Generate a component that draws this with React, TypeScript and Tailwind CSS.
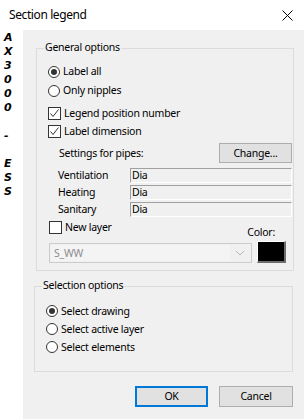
const strip = ['A', 'X', '3', '0', '0', '0', '', '-', '', 'E', 'S', 'S']

function Radio({checked, label}: {checked?: boolean; label: string}) {
  return (
    <div className="flex items-center h-full gap-[3px]">
      <div className="w-[12px] h-[12px] rounded-full border border-[#333333] bg-white flex items-center justify-center">
        {checked && <div className="w-[6px] h-[6px] rounded-full bg-[#333333]" />}
      </div>
      <span>{label}</span>
    </div>
  )
}

function Check({checked, label}: {checked?: boolean; label: string}) {
  return (
    <div className="flex items-center h-full gap-[3px]">
      <div className="w-[13px] h-[13px] border border-[#333333] bg-white flex items-center justify-center">
        {checked && (
          <svg width="11" height="11" viewBox="0 0 11 11">
            <path d="M1.5 5.5L4 8.5L9.5 1.5" fill="none" stroke="#333333" strokeWidth="1" />
          </svg>
        )}
      </div>
      <span>{label}</span>
    </div>
  )
}

function Field({label}: {label: string}) {
  return (
    <div className="flex h-[15px] items-center">
      <span className="w-[82px] pl-[10px]">{label}</span>
      <div className="flex-1 h-full border-t border-l border-[#a0a0a0] border-b-white border-r-white border-b border-r flex items-center pl-[1px]">
        Dia
      </div>
    </div>
  )
}

export default function App() {
  return (
    <div className="w-[304px] h-[419px] bg-white flex flex-col font-['Noto_Sans',sans-serif] text-[10.5px] tracking-[-0.25px] text-black leading-none overflow-hidden">
      <div className="h-[30px] flex items-center justify-between pl-[9px] pr-[11px]">
        <span className="text-[12px] tracking-[-0.4px]">Section legend</span>
        <svg width="11" height="11" viewBox="0 0 11 11">
          <path d="M0.5 0.5L10.5 10.5M10.5 0.5L0.5 10.5" stroke="#000" strokeWidth="1" />
        </svg>
      </div>
      <div className="flex flex-1">
        <div className="w-[23px] pt-[1px] pl-[4px] flex flex-col font-['DejaVu_Sans',sans-serif] font-bold italic text-[11px] tracking-normal">
          {strip.map((c, i) => (
            <div key={i} className="h-[14px] leading-[14px]">
              {c}
            </div>
          ))}
        </div>
        <div className="flex-1 bg-[#f0f0f0] flex flex-col pt-[18px]">
          {/* general options */}
          <div className="relative ml-[13px] w-[258px] h-[223px] border border-[#dcdcdc] pt-[13px] pl-[11px] pr-[1px] flex flex-col">
            <span className="absolute left-[7px] -top-[7px] px-[1px] bg-[#f0f0f0]">General options</span>
            <div className="h-[19px]">
              <Radio checked label="Label all" />
            </div>
            <div className="h-[19px]">
              <Radio label="Only nipples" />
            </div>
            <div className="h-[18px] mt-[4px]">
              <Check checked label="Legend position number" />
            </div>
            <div className="h-[18px]">
              <Check checked label="Label dimension" />
            </div>
            <div className="h-[20px] mt-[3px] flex items-center justify-between">
              <span className="pl-[11px]">Settings for pipes:</span>
              <button className="w-[73px] h-[20px] bg-[#e1e1e1] border border-[#adadad] flex items-center justify-center">
                Change...
              </button>
            </div>
            <div className="mt-[5px] flex flex-col gap-[2px]">
              <Field label="Ventilation" />
              <Field label="Heating" />
              <Field label="Sanitary" />
            </div>
            <div className="h-[16px] mt-[4px] flex">
              <div className="self-start h-[13px] ml-[1px]">
                <Check label="New layer" />
              </div>
              <span className="ml-auto self-end pr-[17px]">Color:</span>
            </div>
            <div className="h-[22px] mt-[4px] flex items-end">
              <div className="ml-[1px] w-[203px] h-[20px] border border-[#cccccc] bg-[#f0f0f0] flex items-center p-[1px]">
                <div className="flex-1 h-full bg-[#f4f4f4] flex items-center pl-[3px] text-[#8d8d8d]">S_WW</div>
                <svg width="20" height="10" viewBox="0 0 20 10">
                  <path d="M6 3L10 7L14 3" fill="none" stroke="#b5b5b5" strokeWidth="1" />
                </svg>
              </div>
              <div className="ml-[5px] w-[29px] h-[22px] border-t border-l border-white border-b-2 border-r-2 border-b-[#6d6d6d] border-r-[#6d6d6d] bg-black" />
            </div>
          </div>

          {/* selection options */}
          <div className="relative ml-[11px] mt-[15px] w-[259px] h-[86px] border border-[#dcdcdc] pt-[15px] pl-[11px] flex flex-col">
            <span className="absolute left-[7px] -top-[7px] px-[1px] bg-[#f0f0f0]">Selection options</span>
            <div className="h-[18px]">
              <Radio checked label="Select drawing" />
            </div>
            <div className="h-[18px]">
              <Radio label="Select active layer" />
            </div>
            <div className="h-[18px]">
              <Radio label="Select elements" />
            </div>
          </div>

          <div className="mt-[14px] flex justify-end gap-[11px] pr-[11px]">
            <button className="w-[73px] h-[21px] bg-[#e1e1e1] border-2 border-[#0078d7] flex items-center justify-center">
              OK
            </button>
            <button className="w-[74px] h-[21px] bg-[#e1e1e1] border border-[#adadad] flex items-center justify-center">
              Cancel
            </button>
          </div>
        </div>
      </div>
    </div>
  )
}
